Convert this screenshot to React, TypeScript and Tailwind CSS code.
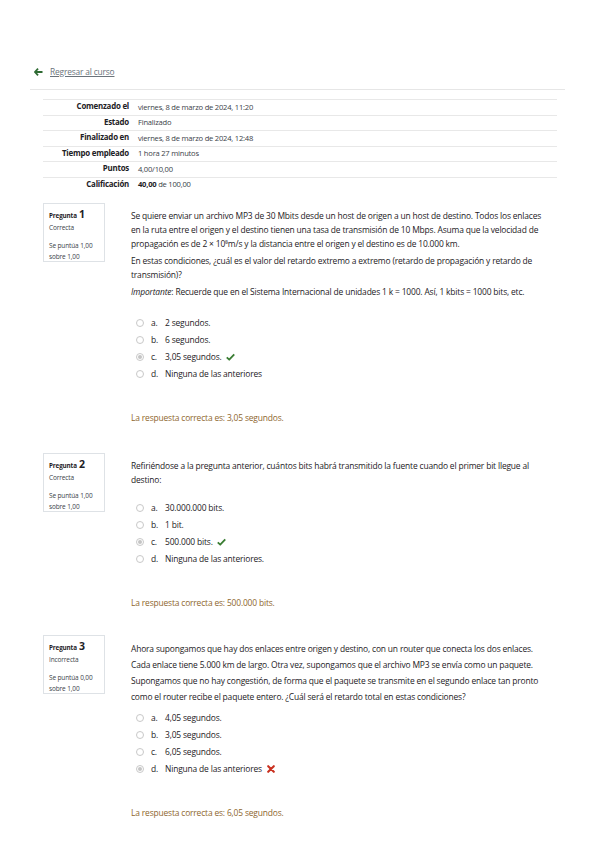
import React from 'react';

interface Opcion {
  letra: string;
  texto: string;
  marcada?: boolean;
  estado?: 'ok' | 'mal';
}

interface Pregunta {
  num: number;
  estado: string;
  puntua: string;
  parrafos: React.ReactNode[];
  opciones: Opcion[];
  correcta: string;
  lineaAlta?: boolean;
  mtOpciones: string;
  mtPregunta: string;
}

const preguntas: Pregunta[] = [
  {
    num: 1,
    estado: 'Correcta',
    puntua: '1,00',
    mtPregunta: 'mt-[10px]',
    mtOpciones: 'mt-[16px]',
    parrafos: [
      <>
        Se quiere enviar un archivo MP3 de 30 Mbits desde un host de origen a un host de destino. Todos los enlaces en la
        ruta entre el origen y el destino tienen una tasa de transmisión de 10 Mbps. Asuma que la velocidad de
        propagación es de 2 × 10⁸m/s y la distancia entre el origen y el destino es de 10.000 km.
      </>,
      <>
        En estas condiciones, ¿cuál es el valor del retardo extremo a extremo (retardo de propagación y retardo de
        transmisión)?
      </>,
      <>
        <i>Importante</i>: Recuerde que en el Sistema Internacional de unidades 1 k = 1000. Así, 1 kbits = 1000 bits, etc.
      </>,
    ],
    opciones: [
      { letra: 'a.', texto: '2 segundos.' },
      { letra: 'b.', texto: '6 segundos.' },
      { letra: 'c.', texto: '3,05 segundos.', marcada: true, estado: 'ok' },
      { letra: 'd.', texto: 'Ninguna de las anteriores' },
    ],
    correcta: 'La respuesta correcta es: 3,05 segundos.',
  },
  {
    num: 2,
    estado: 'Correcta',
    puntua: '1,00',
    mtPregunta: 'mt-[28px]',
    mtOpciones: 'mt-[13px]',
    parrafos: [
      <>Refiriéndose a la pregunta anterior, cuántos bits habrá transmitido la fuente cuando el primer bit llegue al destino:</>,
    ],
    opciones: [
      { letra: 'a.', texto: '30.000.000 bits.' },
      { letra: 'b.', texto: '1 bit.' },
      { letra: 'c.', texto: '500.000 bits.', marcada: true, estado: 'ok' },
      { letra: 'd.', texto: 'Ninguna de las anteriores.' },
    ],
    correcta: 'La respuesta correcta es: 500.000 bits.',
  },
  {
    num: 3,
    estado: 'Incorrecta',
    puntua: '0,00',
    mtPregunta: 'mt-[25px]',
    mtOpciones: 'mt-[5px]',
    lineaAlta: true,
    parrafos: [
      <>
        Ahora supongamos que hay dos enlaces entre origen y destino, con un router que conecta los dos enlaces. Cada
        enlace tiene 5.000 km de largo. Otra vez, supongamos que el archivo MP3 se envía como un paquete. Supongamos que
        no hay congestión, de forma que el paquete se transmite en el segundo enlace tan pronto como el router recibe el
        paquete entero. ¿Cuál será el retardo total en estas condiciones?
      </>,
    ],
    opciones: [
      { letra: 'a.', texto: '4,05 segundos.' },
      { letra: 'b.', texto: '3,05 segundos.' },
      { letra: 'c.', texto: '6,05 segundos.' },
      { letra: 'd.', texto: 'Ninguna de las anteriores', marcada: true, estado: 'mal' },
    ],
    correcta: 'La respuesta correcta es: 6,05 segundos.',
  },
];

const resumen: [string, React.ReactNode][] = [
  ['Comenzado el', 'viernes, 8 de marzo de 2024, 11:20'],
  ['Estado', 'Finalizado'],
  ['Finalizado en', 'viernes, 8 de marzo de 2024, 12:48'],
  ['Tiempo empleado', '1 hora 27 minutos'],
  ['Puntos', '4,00/10,00'],
  [
    'Calificación',
    <>
      <b className="text-[#1d2125]">40,00</b> de 100,00
    </>,
  ],
];

function Radio({ marcada }: { marcada?: boolean }) {
  return (
    <span className="w-[8px] h-[8px] rounded-full border border-[#c8c8c8] bg-white flex items-center justify-center shrink-0">
      {marcada && <span className="w-[4px] h-[4px] rounded-full bg-[#c4c4c4]" />}
    </span>
  );
}

function Check() {
  return (
    <svg width="9" height="8" viewBox="0 0 12 10" className="ml-[4px]">
      <path d="M1 5.5 L4.3 8.6 L11 1.4" fill="none" stroke="#3a7d33" strokeWidth="2.4" strokeLinejoin="round" />
    </svg>
  );
}

function Cruz() {
  return (
    <svg width="8" height="8" viewBox="0 0 10 10" className="ml-[5px]">
      <path d="M1.5 1.5 L8.5 8.5 M8.5 1.5 L1.5 8.5" stroke="#ca3120" strokeWidth="2.6" strokeLinecap="round" />
    </svg>
  );
}

export default function App() {
  return (
    <div
      className="min-h-screen bg-white text-[#1d2125] pt-[66px] pb-10"
      style={{ fontFamily: '"Open Sans", "Noto Sans", sans-serif' }}
    >
      {/* volver */}
      <div className="px-[34px] flex items-center h-[12px]">
        <svg width="9" height="8" viewBox="0 0 10 9" className="mr-[7px]">
          <path d="M4.5 0.8 L1 4.5 L4.5 8.2 M1.2 4.5 H9.5" fill="none" stroke="#2f6b33" strokeWidth="2" />
        </svg>
        <a className="text-[8.4px] text-[#6a737b] underline tracking-[-0.02em]">Regresar al curso</a>
      </div>
      <div className="mx-[30px] mr-[34px] mt-[11px] border-t border-[#e6e6e6]" />

      <div className="ml-[43px] mr-[42px]">
        {/* resumen */}
        <table className="w-full mt-[9px] text-[7.6px] tracking-[-0.03em] border-collapse">
          <tbody>
            {resumen.map(([k, v], i) => (
              <tr key={k} className={i < resumen.length - 1 ? 'border-t border-b border-[#e8e8e8]' : 'border-t border-[#e8e8e8]'}>
                <th className="w-[95px] pr-[9px] text-right font-bold text-[7.9px] h-[15.5px] py-0 text-[#1d2125]">{k}</th>
                <td className="text-[#3b4248] h-[15.5px] py-0">{v}</td>
              </tr>
            ))}
          </tbody>
        </table>

        {/* preguntas */}
        {preguntas.map((p) => (
          <div key={p.num} className={`flex ${p.mtPregunta}`}>
            <div className="w-[62px] h-[59px] shrink-0 border border-[#dee2e6] bg-white px-[5px] pt-[4px] text-[6.5px] text-[#3b4248] tracking-[-0.02em]">
              <div className="flex items-baseline gap-[2px] text-[#1d2125]">
                <span className="font-bold text-[6.3px]">Pregunta</span>
                <span className="font-bold text-[10.5px] leading-[12px]">{p.num}</span>
              </div>
              <div className="mt-[3px]">{p.estado}</div>
              <div className="mt-[7px] leading-[11px]">
                Se puntúa {p.puntua}
                <br />
                sobre 1,00
              </div>
            </div>

            <div className="ml-[26px] mr-[10px] flex-1 pt-[6px] text-[8.45px] tracking-[-0.02em] text-[#1d2125]">
              <div className="flex flex-col gap-[3px]">
                {p.parrafos.map((t, i) => (
                  <p key={i} className={p.lineaAlta ? 'leading-[16px]' : 'leading-[14px]'}>
                    {t}
                  </p>
                ))}
              </div>

              <div className={`${p.mtOpciones} ml-[5px] flex flex-col`}>
                {p.opciones.map((o) => (
                  <div key={o.letra} className="flex items-center h-[17px]">
                    <Radio marcada={o.marcada} />
                    <span className="ml-[7px] w-[14px]">{o.letra}</span>
                    <span>{o.texto}</span>
                    {o.estado === 'ok' && <Check />}
                    {o.estado === 'mal' && <Cruz />}
                  </div>
                ))}
              </div>

              <div className="mt-[28px] text-[#8e662e] leading-[14px]">{p.correcta}</div>
            </div>
          </div>
        ))}
      </div>
    </div>
  );
}
